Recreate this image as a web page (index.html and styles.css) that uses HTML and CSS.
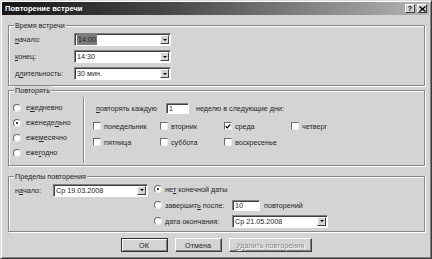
FILE: index.html
```html
<!DOCTYPE html>
<html lang="ru">
  <head>
    <meta charset="UTF-8" />
    <title>Повторение встречи</title>
    <link rel="stylesheet" href="styles.css">
  </head>
  <body>
    <div class="window">
      <div class="titlebar">
        <span class="title">Повторение встречи</span>
        <span class="cap-btn">?</span>
        <span class="cap-btn close">
          <svg width="7" height="6" viewBox="0 0 7 6"><path d="M0.5 0.5 L6.5 5.5 M6.5 0.5 L0.5 5.5" stroke="#000" stroke-width="1.2"/></svg>
        </span>
      </div>

      <div class="content">
        <div class="group time">
          <span class="group-title">Время встречи</span>
          <label class="lbl"><u>н</u>ачало:</label>
          <div class="combo"><span class="combo-text"><span class="sel">14:00</span></span><span class="drop"></span></div>
          <label class="lbl"><u>к</u>онец:</label>
          <div class="combo"><span class="combo-text">14:30</span><span class="drop"></span></div>
          <label class="lbl">д<u>л</u>ительность:</label>
          <div class="combo"><span class="combo-text">30 мин.</span><span class="drop"></span></div>
        </div>

        <div class="group repeat">
          <span class="group-title">Повторять</span>
          <div class="freq">
            <div class="opt"><span class="radio"></span>е<u>ж</u>едневно</div>
            <div class="opt"><span class="radio on"></span>еженеде<u>л</u>ьно</div>
            <div class="opt"><span class="radio"></span>еже<u>м</u>есячно</div>
            <div class="opt"><span class="radio"></span>еже<u>г</u>одно</div>
          </div>
          <div class="weekly">
            <div class="every">
              <span><u>п</u>овторять каждую</span>
              <span class="field small">1</span>
              <span>неделю в следующие дни:</span>
            </div>
            <div class="days">
              <div class="opt"><span class="check"></span>понедельник</div>
              <div class="opt"><span class="check"></span>вторник</div>
              <div class="opt"><span class="check on"><svg width="7" height="7" viewBox="0 0 7 7"><path d="M0.8 3.2 L2.6 5.2 L6.2 1" fill="none" stroke="#000" stroke-width="1.4"/></svg></span>среда</div>
              <div class="opt"><span class="check"></span>четверг</div>
              <div class="opt"><span class="check"></span>пятница</div>
              <div class="opt"><span class="check"></span>суббота</div>
              <div class="opt"><span class="check"></span>воскресенье</div>
            </div>
          </div>
        </div>

        <div class="group range">
          <span class="group-title">Пределы повторения</span>
          <div class="range-start">
            <label class="lbl">н<u>а</u>чало:</label>
            <div class="combo wide"><span class="combo-text">Ср 19.03.2008</span><span class="drop"></span></div>
          </div>
          <div class="range-end">
            <div class="opt"><span class="radio on"></span>не<u>т</u>&nbsp;конечной даты</div>
            <div></div>
            <div class="opt"><span class="radio"></span>завершит<u>ь</u>&nbsp;после:</div>
            <div class="opt"><span class="field count">10</span>повторений</div>
            <div class="opt"><span class="radio"></span><u>д</u>ата окончания:</div>
            <div class="combo end"><span class="combo-text">Ср 21.05.2008</span><span class="drop"></span></div>
          </div>
        </div>

        <div class="buttons">
          <button class="btn default">ОК</button>
          <button class="btn">Отмена</button>
          <button class="btn wide-btn" disabled><u>У</u>далить повторения</button>
        </div>
      </div>
    </div>
  </body>
</html>
```

FILE: styles.css
```css
body {
  margin: 0;
  font-family: "Liberation Sans", Arial, sans-serif;
  font-size: 7.2px;
  color: #262626;
}

.window {
  width: 432px;
  height: 259px;
  box-sizing: border-box;
  background-color: #d4d4d4;
  border: 1px solid;
  border-color: #dcdcdc #3a3a3a #3a3a3a #dcdcdc;
  box-shadow: inset 1px 1px 0 #fff, inset -1px -1px 0 #808080;
  padding: 1px 2px 0 1px;
}

.titlebar {
  display: flex;
  align-items: center;
  height: 13px;
  padding: 0 2px 0 3px;
  background: linear-gradient(to right, #161616, #4a4a4a 40%, #b4b4b4);
}

.title {
  flex: 1;
  color: #fff;
  font-weight: bold;
  font-size: 7.6px;
}

.cap-btn {
  display: flex;
  align-items: center;
  justify-content: center;
  width: 10px;
  height: 9px;
  box-sizing: border-box;
  margin-left: 1px;
  background-color: #d4d4d4;
  border: 1px solid;
  border-color: #fff #404040 #404040 #fff;
  font-weight: bold;
  font-size: 7px;
  line-height: 7px;
  color: #000;
}

.cap-btn.close {
  margin-left: 2px;
}

.content {
  padding: 0 4px 0 6px;
}

.group {
  position: relative;
  border: 1px solid #888;
  box-shadow: 1px 1px 0 #fff, inset 1px 1px 0 #fff;
}

.group-title {
  position: absolute;
  top: -5px;
  left: 5px;
  padding: 0 1px;
  line-height: 9px;
  background-color: #d4d4d4;
}

u {
  text-decoration-thickness: 1px;
  text-underline-offset: 1px;
}

.lbl {
  display: flex;
  align-items: center;
}

/* combobox */
.combo {
  display: flex;
  height: 13px;
  box-sizing: border-box;
  background-color: #fff;
  border: 1px solid;
  border-color: #808080 #fff #fff #808080;
  box-shadow: inset 1px 1px 0 #404040;
}

.combo-text {
  flex: 1;
  display: flex;
  align-items: center;
  padding-left: 2px;
}

.sel {
  background-color: #7c7c7c;
  color: #222;
  padding: 1px 1px;
}

.drop {
  width: 9px;
  margin: 1px 1px 1px 0;
  background-color: #d4d4d4;
  box-sizing: border-box;
  border: 1px solid;
  border-color: #fff #404040 #404040 #fff;
  display: flex;
  align-items: center;
  justify-content: center;
}

.drop::after {
  content: "";
  border-left: 2px solid transparent;
  border-right: 2px solid transparent;
  border-top: 2px solid #000;
}

.field {
  display: flex;
  align-items: center;
  height: 11px;
  box-sizing: border-box;
  padding-left: 2px;
  background-color: #fff;
  border: 1px solid;
  border-color: #808080 #fff #fff #808080;
  box-shadow: inset 1px 1px 0 #404040;
}

/* group 1 */
.time {
  margin-top: 10px;
  height: 61px;
  box-sizing: border-box;
  padding: 7px 0 0 6px;
  display: grid;
  grid-template-columns: 59px 97px;
  grid-auto-rows: 13px;
  row-gap: 4px;
}

/* group 2 */
.repeat {
  margin-top: 4px;
  height: 76px;
  box-sizing: border-box;
  padding: 6px 0 2px 0;
  display: flex;
}

.freq {
  width: 74px;
  padding-top: 3px;
  border-right: 1px solid #888;
  box-shadow: 1px 0 0 #fff;
}

.opt {
  display: flex;
  align-items: center;
  white-space: nowrap;
}

.freq .opt {
  height: 15px;
  padding-left: 4px;
}

.radio {
  width: 8px;
  height: 8px;
  box-sizing: border-box;
  margin-right: 5px;
  border-radius: 50%;
  background-color: #fff;
  border: 1px solid;
  border-color: #6a6a6a #e8e8e8 #e8e8e8 #6a6a6a;
  display: flex;
  align-items: center;
  justify-content: center;
}

.radio.on::after {
  content: "";
  width: 2px;
  height: 2px;
  border-radius: 50%;
  background-color: #000;
}

.check {
  width: 8px;
  height: 8px;
  box-sizing: border-box;
  margin-right: 3px;
  background-color: #fff;
  border: 1px solid;
  border-color: #6a6a6a #e8e8e8 #e8e8e8 #6a6a6a;
  display: flex;
  align-items: center;
  justify-content: center;
}

.weekly {
  padding: 5px 0 0 9px;
}

.every {
  display: flex;
  align-items: center;
  height: 13px;
  padding-left: 3px;
}

.field.small {
  width: 23px;
  margin: 0 7px 0 9px;
}

.days {
  margin-top: 3px;
  display: grid;
  grid-template-columns: 67px 64px 67px 60px;
  grid-auto-rows: 16px;
}

/* group 3 */
.range {
  margin-top: 10px;
  height: 56px;
  box-sizing: border-box;
  padding: 4px 0 0 6px;
  display: flex;
}

.range-start {
  display: flex;
  height: 16px;
  align-items: center;
  padding-top: 1px;
}

.range-start .lbl {
  width: 38px;
}

.combo.wide {
  width: 95px;
}

.range-end {
  margin-left: 6px;
  display: grid;
  grid-template-columns: 78px 100px;
  grid-auto-rows: 16px;
}

.range-end .opt .radio {
  margin-right: 3px;
}

.field.count {
  width: 28px;
  margin-right: 4px;
}

.combo.end {
  width: 96px;
  align-self: center;
}

/* buttons */
.buttons {
  margin-top: 6px;
  display: flex;
  justify-content: center;
  gap: 7px;
  padding-right: 1px;
}

.btn {
  width: 47px;
  height: 14px;
  padding: 0;
  font-family: inherit;
  font-size: 7.2px;
  color: #262626;
  background-color: #d4d4d4;
  border: 1px solid;
  border-color: #fff #404040 #404040 #fff;
  box-shadow: inset -1px -1px 0 #808080;
}

.btn.default {
  border-color: #303030;
  box-shadow: inset 1px 1px 0 #fff, inset -1px -1px 0 #808080;
}

.btn.wide-btn {
  width: 83px;
}

.btn:disabled {
  color: #8a8a8a;
  text-shadow: 1px 1px 0 #fff;
}
```
